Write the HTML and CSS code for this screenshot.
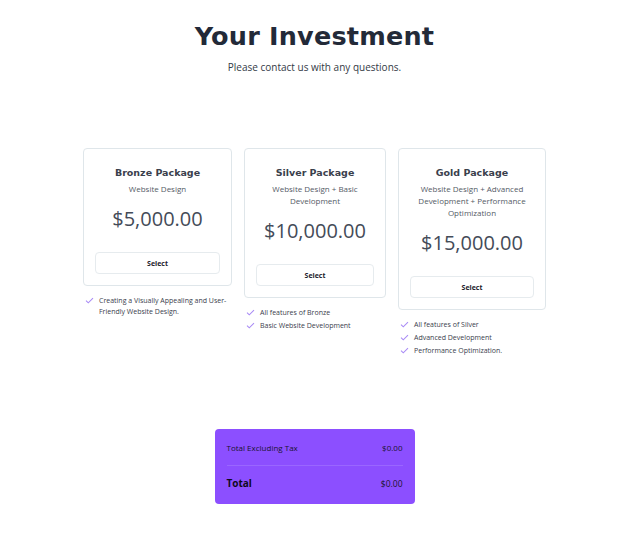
FILE: index.html
```html
<!DOCTYPE html>
<html lang="en">
<head>
  <meta charset="UTF-8" />
  <meta name="viewport" content="width=device-width, initial-scale=1.0" />
  <title>Your Investment</title>
  <link rel="stylesheet" href="styles.css">
</head>
<body>
  <div class="page">
    <header class="intro">
      <h1>Your Investment</h1>
      <p>Please contact us with any questions.</p>
    </header>

    <section class="packages">
      <div class="package">
        <div class="card">
          <h3>Bronze Package</h3>
          <p class="desc">Website Design</p>
          <div class="price">$5,000.00</div>
          <button class="select">Select</button>
        </div>
        <ul class="features">
          <li><svg viewBox="0 0 10 8"><path d="M1 4.2 L3.6 6.6 L9 1.4"/></svg><span>Creating a Visually Appealing and User-Friendly Website Design.</span></li>
        </ul>
      </div>

      <div class="package">
        <div class="card">
          <h3>Silver Package</h3>
          <p class="desc">Website Design + Basic Development</p>
          <div class="price">$10,000.00</div>
          <button class="select">Select</button>
        </div>
        <ul class="features">
          <li><svg viewBox="0 0 10 8"><path d="M1 4.2 L3.6 6.6 L9 1.4"/></svg><span>All features of Bronze</span></li>
          <li><svg viewBox="0 0 10 8"><path d="M1 4.2 L3.6 6.6 L9 1.4"/></svg><span>Basic Website Development</span></li>
        </ul>
      </div>

      <div class="package">
        <div class="card">
          <h3>Gold Package</h3>
          <p class="desc">Website Design + Advanced Development + Performance Optimization</p>
          <div class="price">$15,000.00</div>
          <button class="select">Select</button>
        </div>
        <ul class="features">
          <li><svg viewBox="0 0 10 8"><path d="M1 4.2 L3.6 6.6 L9 1.4"/></svg><span>All features of Silver</span></li>
          <li><svg viewBox="0 0 10 8"><path d="M1 4.2 L3.6 6.6 L9 1.4"/></svg><span>Advanced Development</span></li>
          <li><svg viewBox="0 0 10 8"><path d="M1 4.2 L3.6 6.6 L9 1.4"/></svg><span>Performance Optimization.</span></li>
        </ul>
      </div>
    </section>

    <section class="summary">
      <div class="row">
        <span>Total Excluding Tax</span>
        <span>$0.00</span>
      </div>
      <div class="row total">
        <span>Total</span>
        <span class="amount">$0.00</span>
      </div>
    </section>
  </div>
</body>
</html>
```

FILE: styles.css
```css
body {
  margin: 0;
  background: #ffffff;
  font-family: "Open Sans", Arial, sans-serif;
  color: #2a2f3b;
}
.page {
  padding: 18px 0 0 10px;
  display: flex;
  flex-direction: column;
  align-items: center;
}
.intro {
  text-align: center;
}
.intro h1 {
  margin: 0;
  font-family: "DejaVu Sans", sans-serif;
  font-weight: bold;
  font-size: 25.5px;
  line-height: 37px;
  letter-spacing: 0.2px;
  color: #232a38;
}
.intro p {
  margin: 5px 0 0;
  font-size: 10px;
  line-height: 14px;
  color: #333a46;
}
.packages {
  display: grid;
  grid-template-columns: 149px 142px 148px;
  gap: 12px;
  align-items: start;
  margin-top: 74px;
}
.card {
  border: 1px solid #dfe6ea;
  border-radius: 4px;
  padding: 17px 11px 11px;
  text-align: center;
}
.card h3 {
  margin: 0;
  font-family: "DejaVu Sans", sans-serif;
  font-size: 9.5px;
  line-height: 14px;
  font-weight: bold;
  color: #3a404c;
}
.desc {
  margin: 3px 0 0;
  font-size: 8px;
  line-height: 12px;
  color: #555b66;
}
.price {
  margin-top: 9px;
  font-size: 20px;
  line-height: 30px;
  color: #444b58;
}
.select {
  display: block;
  width: 100%;
  height: 22px;
  margin-top: 18px;
  background: #ffffff;
  border: 1px solid #e6ebee;
  border-radius: 4px;
  font-family: "Open Sans", Arial, sans-serif;
  font-size: 7px;
  font-weight: bold;
  color: #1d222c;
}
.features {
  list-style: none;
  margin: 9px 0 0;
  padding: 0 0 0 2px;
}
.features li {
  display: flex;
  gap: 5px;
  font-size: 7px;
  line-height: 11px;
  color: #3a404c;
  margin-bottom: 2px;
}
.features svg {
  flex: none;
  width: 9px;
  height: 7px;
  margin-top: 2px;
  fill: none;
  stroke: #a88af5;
  stroke-width: 1.2;
}
.summary {
  margin-top: 71px;
  width: 200px;
  box-sizing: border-box;
  padding: 0 12px;
  background: #8c4fff;
  border-radius: 4px;
  color: #1b1430;
}
.row {
  display: flex;
  justify-content: space-between;
  align-items: center;
  height: 36px;
  font-size: 8px;
}
.row + .row {
  height: 39px;
  box-sizing: border-box;
  padding-bottom: 4px;
  border-top: 1px solid #9a66ff;
}
.total span:first-child {
  font-size: 10px;
  font-weight: bold;
  color: #0f0a1c;
}
.total .amount {
  font-size: 8.5px;
}
```
